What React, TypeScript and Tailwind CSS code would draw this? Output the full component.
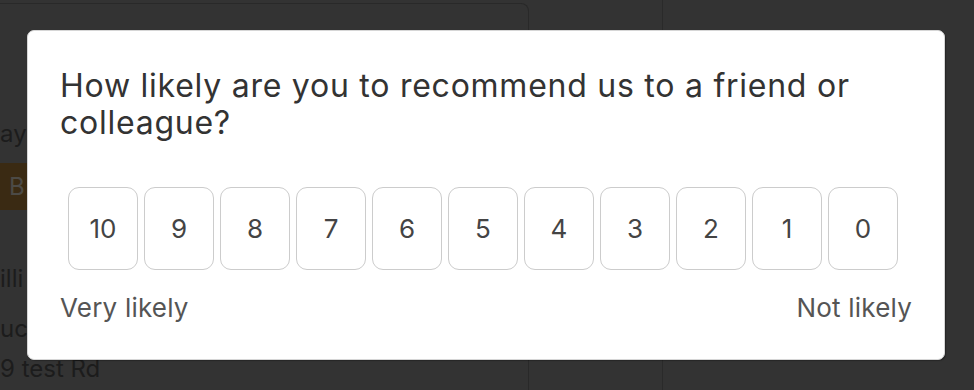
const scores = [10, 9, 8, 7, 6, 5, 4, 3, 2, 1, 0];

function BackdropPage() {
  return (
    <div className="flex h-full w-full">
      <div className="h-full w-[529px] pt-[3px]">
        <div className="h-full overflow-hidden rounded-tr-[8px] border-r border-t border-[#292929] text-[#1c1c1c]">
          <div className="flex flex-col items-start text-[24px] leading-[30px]">
            <div className="mt-[115px]">ay</div>
            <div className="mt-[14px] flex h-[47px] w-[27px] items-center overflow-hidden bg-[#3a2a13] pl-[9px] text-[#4c4a46]">B</div>
            <div className="mt-[54px]">illi</div>
            <div className="mt-[20px]">uc</div>
            <div className="mt-[10px]">9 test Rd</div>
          </div>
        </div>
      </div>
      <div className="h-full w-[134px] border-r border-[#2a2a2a]" />
      <div className="h-full flex-1" />
    </div>
  );
}

function ScoreButton({ value }: { value: number }) {
  return (
    <button
      type="button"
      className="flex h-[83px] w-[70px] shrink-0 items-center justify-center rounded-[11px] border-[1.5px] border-[#cccccc] bg-white text-[26px] text-[#444444]"
    >
      {value}
    </button>
  );
}

export default function App() {
  return (
    <div
      className="relative h-[390px] w-[974px] overflow-hidden bg-[#333333]"
      style={{ fontFamily: 'Inter, "Noto Sans", "Liberation Sans", sans-serif' }}
    >
      <BackdropPage />

      <div className="absolute left-[27px] top-[30px] w-[918px] rounded-[7px] border border-[#d6d6d6] bg-white px-[32px] pb-[36px] pt-[36px] shadow-[1px_1px_1px_rgba(0,0,0,0.25)]">
        <h2 className="text-[32px] leading-[37px] font-normal tracking-[0.75px] text-[#333333]">
          How likely are you to recommend us to a friend or colleague?
        </h2>

        <div className="ml-[8px] mt-[46px] flex gap-[6px]">
          {scores.map((s) => (
            <ScoreButton key={s} value={s} />
          ))}
        </div>

        <div className="mt-[23px] flex justify-between text-[26px] leading-[30px] tracking-[0.2px] text-[#555555]">
          <span>Very likely</span>
          <span>Not likely</span>
        </div>
      </div>
    </div>
  );
}
